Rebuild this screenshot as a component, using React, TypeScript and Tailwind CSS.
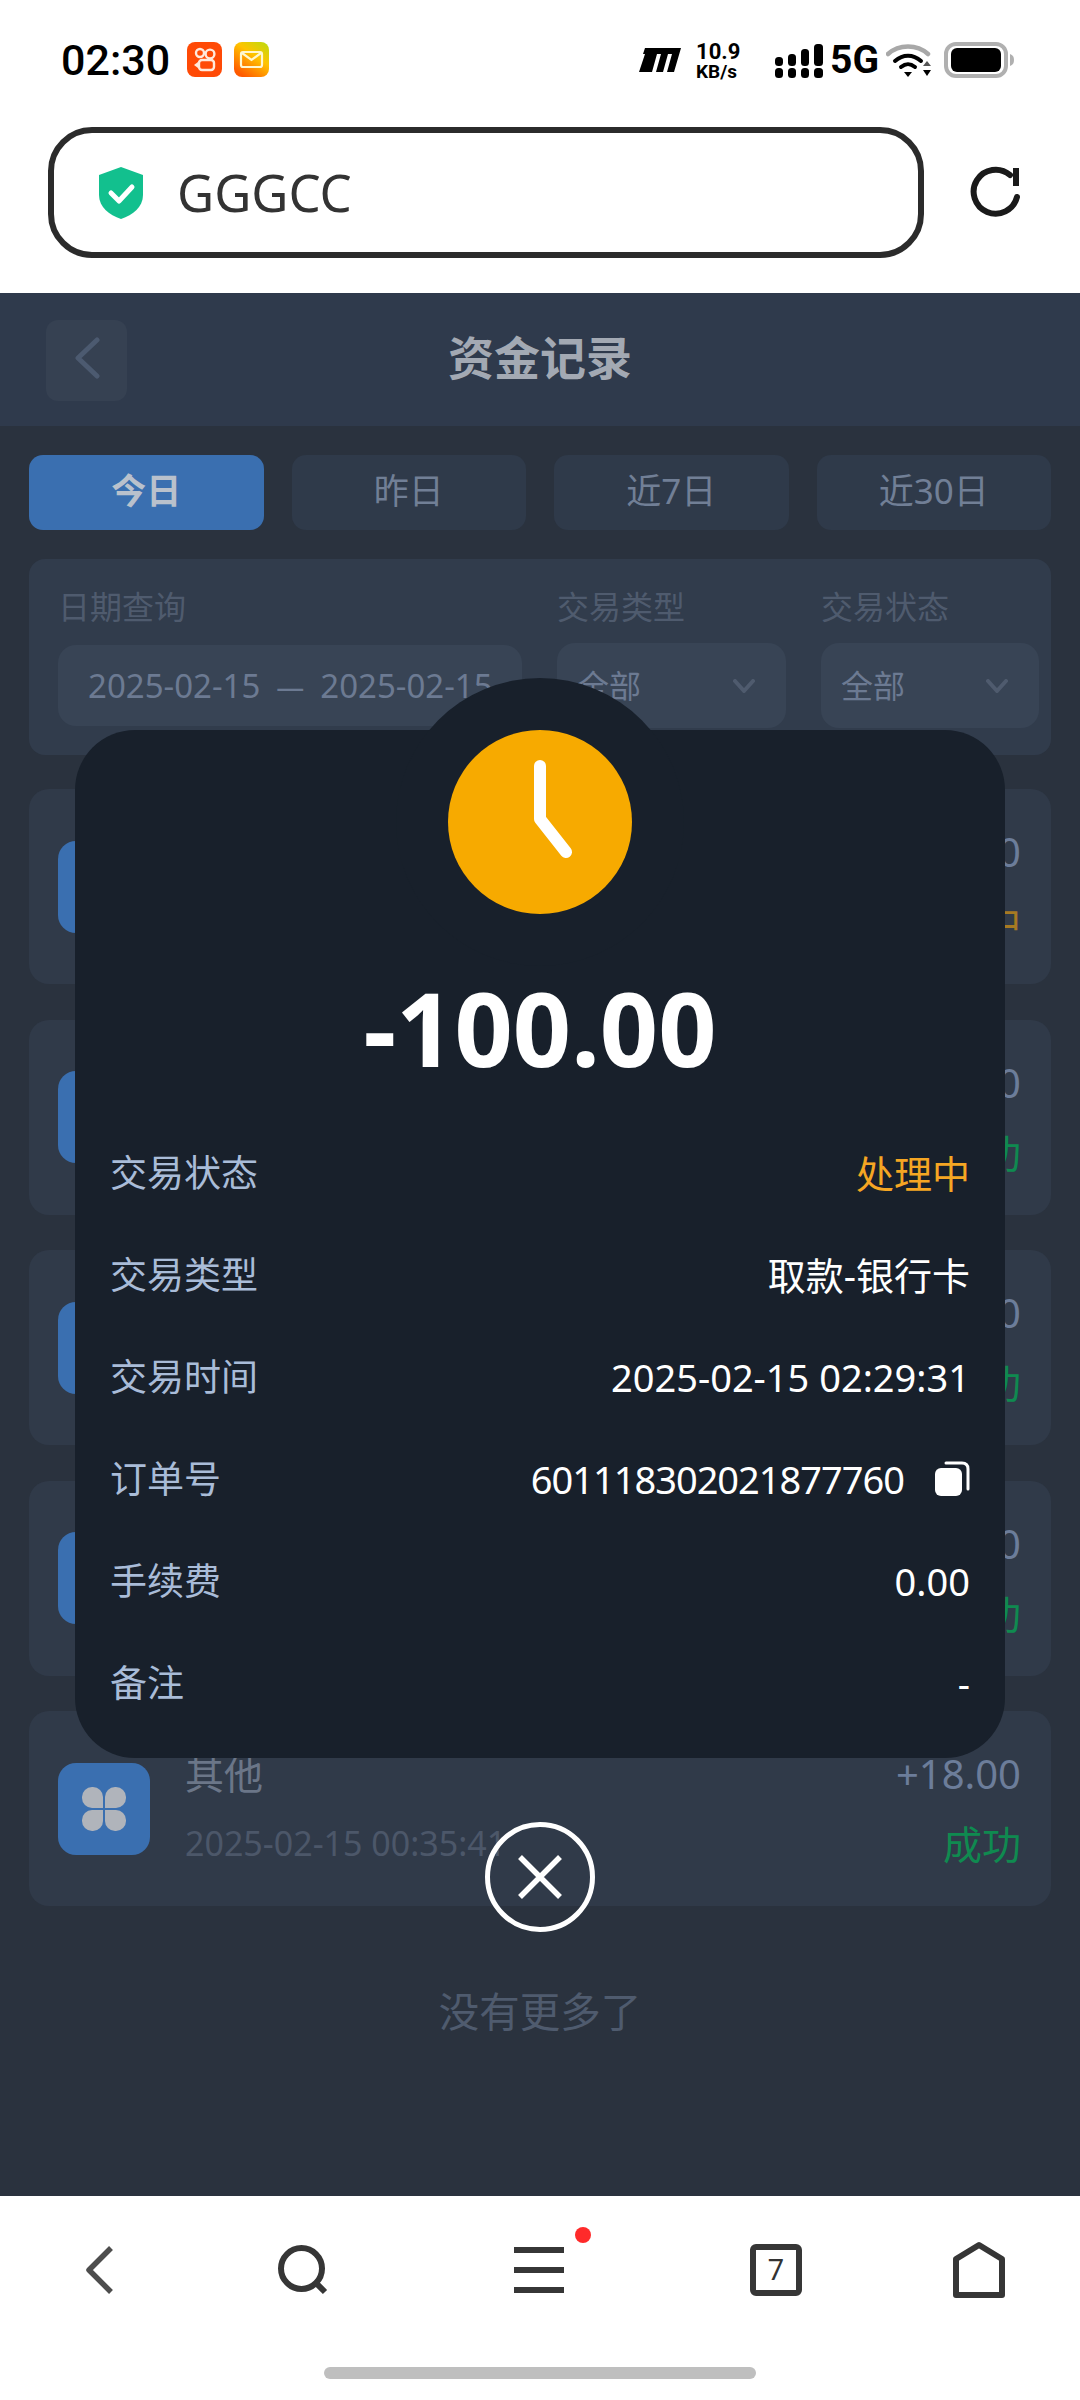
const rows = [
  { label: "交易状态", value: "处理中", tone: "text-[#f5a623]" },
  { label: "交易类型", value: "取款-银行卡", tone: "text-white" },
  { label: "交易时间", value: "2025-02-15 02:29:31", tone: "text-white" },
  { label: "订单号", value: "601118302021877760", tone: "text-white tracking-[-1px]", copy: true },
  { label: "手续费", value: "0.00", tone: "text-white" },
  { label: "备注", value: "-", tone: "text-white" },
];

const records = [
  { title: "取款-银行卡", time: "2025-02-15 02:29:31", amount: "-100.00", status: "处理中", tone: "text-[#a67a22]" },
  { title: "其他", time: "2025-02-15 01:48:12", amount: "+20.00", status: "成功", tone: "text-[#0f8a50]" },
  { title: "其他", time: "2025-02-15 01:20:05", amount: "+30.00", status: "成功", tone: "text-[#0f8a50]" },
  { title: "其他", time: "2025-02-15 00:52:37", amount: "+50.00", status: "成功", tone: "text-[#0f8a50]" },
  { title: "其他", time: "2025-02-15 00:35:41", amount: "+18.00", status: "成功", tone: "text-[#0f8a50]" },
];

const tabs = ["今日", "昨日", "近7日", "近30日"];

function Chevron() {
  return (
    <svg width="24" height="14" viewBox="0 0 24 14" fill="none" stroke="#4f5b6e" strokeWidth="4" strokeLinecap="round" strokeLinejoin="round">
      <path d="M3 2l9 10 9-10" />
    </svg>
  );
}

function StatusBar() {
  return (
    <div className="flex h-[115px] items-start pl-[61px] pr-[64px] pt-[42px]">
      <span className="h-[36px] w-[110px] font-['Roboto',sans-serif] text-[43px] leading-[36px] font-medium text-black">02:30</span>
      <svg className="ml-[16px]" width="35" height="35" viewBox="0 0 35 35" fill="none">
        <rect width="35" height="35" rx="8" fill="#ff4a06" />
        <circle cx="13" cy="11" r="4" stroke="#ffe9dc" strokeWidth="2.4" />
        <circle cx="23" cy="12" r="4.4" stroke="#ffe9dc" strokeWidth="2.4" />
        <rect x="12" y="18" width="15" height="10" rx="3" stroke="#ffe9dc" strokeWidth="2.4" />
        <path d="M11 20l-4 3 4 3z" fill="#ffe9dc" />
      </svg>
      <svg className="ml-[12px]" width="35" height="35" viewBox="0 0 35 35" fill="none">
        <defs>
          <linearGradient id="mailGrad" x1="1" y1="0" x2="0.3" y2="1">
            <stop offset="0" stopColor="#b8dc10" />
            <stop offset="0.45" stopColor="#ffc400" />
            <stop offset="1" stopColor="#ff5a00" />
          </linearGradient>
        </defs>
        <rect width="35" height="35" rx="8" fill="url(#mailGrad)" />
        <rect x="7" y="10" width="21" height="15" rx="2" stroke="#fff7cf" strokeWidth="2.2" />
        <path d="M8 11l9.500 7 9.500-7" stroke="#fff7cf" strokeWidth="2.2" />
      </svg>

      <div className="ml-auto flex items-start">
        <svg className="mt-[6px]" width="42" height="24" viewBox="0 0 42 24" fill="#000">
          <path d="M6 0h36l-7 24h-7l5-18h-4l-5 18h-7l5-18h-4L13 24H0L6 6H4z" />
        </svg>
        <div className="ml-[15px] flex w-[50px] flex-col font-['Roboto',sans-serif] font-bold text-black">
          <span className="text-[22px] leading-[20px]">10.9</span>
          <span className="text-[19px] leading-[20px]">KB/s</span>
        </div>
        <svg className="ml-[29px] mt-[2px]" width="50" height="34" viewBox="0 0 50 34" fill="#000">
          <rect x="0" y="13" width="8" height="9" rx="3.500" />
          <rect x="13" y="10" width="8" height="12" rx="3.500" />
          <rect x="26" y="5" width="8" height="17" rx="3.500" />
          <rect x="39" y="0" width="9" height="22" rx="3.500" />
          <rect x="0" y="24" width="8" height="10" rx="3.500" />
          <rect x="13" y="24" width="8" height="10" rx="3.500" />
          <rect x="26" y="24" width="8" height="10" rx="3.500" />
          <rect x="39" y="24" width="9" height="10" rx="3.500" />
        </svg>
        <span className="ml-[5px] font-['Roboto',sans-serif] text-[39px] leading-[36px] font-bold text-black">5G</span>
        <svg className="ml-[7px] mt-[2px]" width="46" height="34" viewBox="0 0 46 34" fill="none">
          <path d="M2 10C13 0 31 0 42 10" stroke="#a8a8a8" strokeWidth="4.500" strokeLinecap="round" />
          <path d="M9 17c8-7 18-7 26 0" stroke="#000" strokeWidth="4" strokeLinecap="round" />
          <path d="M15 23c5-4 9-4 14 0" stroke="#000" strokeWidth="4" strokeLinecap="round" />
          <path d="M18 28h8l-4 5z" fill="#000" />
          <path d="M41 17l4 5h-8z" fill="#555" />
          <path d="M37 26h8l-4 6z" fill="#000" />
        </svg>
        <svg className="ml-[12px]" width="72" height="36" viewBox="0 0 72 36" fill="none">
          <rect x="2" y="2" width="60" height="32" rx="10" stroke="#b0b0b0" strokeWidth="4" />
          <rect x="7" y="6" width="50" height="24" rx="6" fill="#000" />
          <path d="M66 12c3 1 4 3 4 6s-1 5-4 6z" fill="#b0b0b0" />
        </svg>
      </div>
    </div>
  );
}

function UrlBar() {
  return (
    <div className="flex h-[178px] items-start pl-[48px] pr-[58px] pt-[12px]">
      <div className="flex h-[131px] w-[876px] items-center rounded-[44px] border-[6px] border-[#2b2b2b] pl-[43px]">
        <svg width="48" height="52" viewBox="0 0 48 52">
          <path d="M24 0l22 8v20c0 12-10 20-22 24C12 48 2 40 2 28V8z" fill="#12c08e" />
          <path d="M14 26l8 8 13-14" fill="none" stroke="#fff" strokeWidth="5" strokeLinecap="round" strokeLinejoin="round" />
        </svg>
        <span className="ml-[32px] font-['Noto_Sans',sans-serif] text-[51px] leading-none text-[#333]">GGGCC</span>
      </div>
      <svg className="ml-[44px] mt-[38px]" width="54" height="54" viewBox="0 0 54 54" fill="none">
        <path d="M49 32A22 22 0 1 1 42 10" stroke="#1a1a1a" strokeWidth="6" strokeLinecap="round" />
        <rect x="45" y="3" width="6" height="18" fill="#1a1a1a" />
      </svg>
    </div>
  );
}

function BottomNav() {
  return (
    <div className="flex h-[204px] flex-col bg-white">
      <div className="flex h-[171px] items-start pl-[69px] pt-[44px]">
        <div className="flex h-[60px] w-[60px] items-center justify-center">
          <svg width="30" height="48" viewBox="0 0 30 48" fill="none" stroke="#4d4d4d" strokeWidth="5.500" strokeLinejoin="round">
            <path d="M27 2L5 24l22 22" />
          </svg>
        </div>
        <div className="ml-[144px] flex h-[60px] w-[60px] items-center justify-center">
          <svg width="54" height="54" viewBox="0 0 54 54" fill="none" stroke="#363636" strokeWidth="6">
            <circle cx="25.500" cy="25.500" r="20.500" />
            <path d="M39 39l10 10" />
          </svg>
        </div>
        <div className="relative ml-[176px] flex h-[60px] w-[60px] items-center justify-center">
          <div className="flex w-[50px] flex-col gap-[14px]">
            <div className="h-[6px] bg-[#363636]"></div>
            <div className="h-[6px] bg-[#363636]"></div>
            <div className="h-[6px] bg-[#363636]"></div>
          </div>
          <span className="absolute left-[66px] top-[-13px] h-[16px] w-[16px] rounded-full bg-[#ff2a2a]"></span>
        </div>
        <div className="ml-[177px] flex h-[60px] w-[60px] items-center justify-center">
          <div className="flex h-[52px] w-[52px] items-center justify-center rounded-[6px] border-[6px] border-[#363636] font-['Roboto',sans-serif] text-[29px] leading-none text-[#333]">7</div>
        </div>
        <div className="ml-[143px] flex h-[60px] w-[60px] items-center justify-center">
          <svg width="54" height="58" viewBox="0 0 54 58" fill="none" stroke="#363636" strokeWidth="6" strokeLinejoin="round">
            <path d="M27 4L50 18V54H4V18z" />
          </svg>
        </div>
      </div>
      <div className="mx-auto h-[12px] w-[432px] rounded-full bg-[#bfbfbf]"></div>
    </div>
  );
}

function RecordCard({ title, time, amount, status, tone }: (typeof records)[number]) {
  return (
    <div className="flex h-[195px] items-center rounded-[20px] bg-[#303a49] pl-[29px] pr-[30px]">
      <div className="flex h-[92px] w-[92px] items-center justify-center rounded-[18px] bg-[#3a6fb0]">
        <svg width="44" height="44" viewBox="0 0 44 44" fill="#b0b4bb">
          <path d="M21 21H10A10 10 0 0 1 0 11V10A10 10 0 0 1 10 0H11A10 10 0 0 1 21 10Z" />
          <path d="M21 21H10A10 10 0 0 1 0 11V10A10 10 0 0 1 10 0H11A10 10 0 0 1 21 10Z" transform="rotate(90 22 22)" />
          <path d="M21 21H10A10 10 0 0 1 0 11V10A10 10 0 0 1 10 0H11A10 10 0 0 1 21 10Z" transform="rotate(180 22 22)" />
          <path d="M21 21H10A10 10 0 0 1 0 11V10A10 10 0 0 1 10 0H11A10 10 0 0 1 21 10Z" transform="rotate(270 22 22)" />
        </svg>
      </div>
      <div className="ml-[35px] flex flex-1 flex-col gap-[25px]">
        <span className="text-[39px] leading-[45px] text-[#6b7688]">{title}</span>
        <span className="text-[34px] leading-[45px] text-[#4c5769]">{time}</span>
      </div>
      <div className="flex flex-col items-end gap-[25px]">
        <span className="text-[40px] leading-[45px] text-[#6c7d9a]">{amount}</span>
        <span className={`text-[39px] leading-[45px] ${tone}`}>{status}</span>
      </div>
    </div>
  );
}

function DetailModal() {
  return (
    <div className="absolute left-[75px] top-[730px] w-[930px]">
      <div className="relative h-[1028px] rounded-[60px] bg-[#18202b] px-[35px]">
        <div className="absolute left-[321px] top-[-52px] h-[288px] w-[288px] rounded-full bg-[#18202b]"></div>
        <div className="relative flex h-[392px] flex-col items-center">
          <svg width="184" height="184" viewBox="0 0 184 184" fill="none">
            <circle cx="92" cy="92" r="92" fill="#f7aa00" />
            <path d="M92 36v53l26 33" stroke="#fff" strokeWidth="12" strokeLinecap="round" strokeLinejoin="round" />
          </svg>
          <span className="mt-[58px] text-[102px] leading-[112px] font-bold text-white">-100.00</span>
        </div>
        {rows.map((row) => (
          <div key={row.label} className="relative flex h-[102px] items-center justify-between">
            <span className="text-[37px] text-[#a9bcd8]">{row.label}</span>
            <div className="flex items-center">
              <span className={`text-[38px] ${row.tone}`}>{row.value}</span>
              {row.copy && (
                <svg className="ml-[30px]" width="36" height="36" viewBox="0 0 36 36" fill="none">
                  <rect x="1" y="7" width="27" height="28" rx="6" fill="#fff" />
                  <path d="M12 2h16c4 0 6 2 6 6v20" stroke="#fff" strokeWidth="3" strokeLinecap="round" />
                </svg>
              )}
            </div>
          </div>
        ))}
      </div>
      <div className="absolute left-[410px] top-[1092px] flex h-[110px] w-[110px] items-center justify-center rounded-full border-[5px] border-white">
        <svg width="46" height="46" viewBox="0 0 46 46" fill="none" stroke="#fff" strokeWidth="5.500">
          <path d="M3 3l40 40M43 3L3 43" />
        </svg>
      </div>
    </div>
  );
}

export default function App() {
  return (
    <div className="relative flex h-[2400px] w-[1080px] flex-col overflow-hidden bg-white font-['Noto_Sans','Noto_Sans_CJK_SC',sans-serif]">
      <StatusBar />
      <UrlBar />

      <main className="flex flex-1 flex-col bg-[#2a323e]">
        <header className="relative flex h-[133px] items-center justify-center bg-[#2f3a4c] pb-[5px]">
          <div className="absolute left-[46px] top-[27px] flex h-[81px] w-[81px] items-center justify-center rounded-[12px] bg-[#364152] pb-[5px]">
            <svg width="26" height="42" viewBox="0 0 26 42" fill="none" stroke="#4c5a70" strokeWidth="5" strokeLinecap="round" strokeLinejoin="round">
              <path d="M23 3L4 21l19 18" />
            </svg>
          </div>
          <h1 className="text-[46px] font-bold text-[#a3a9b3]">资金记录</h1>
        </header>

        <div className="flex flex-col px-[29px] pt-[29px]">
          <div className="flex gap-[28px]">
            {tabs.map((tab, index) => (
              <div
                key={tab}
                className={`flex h-[75px] flex-1 items-center justify-center rounded-[14px] pb-[3px] text-[35px] ${
                  index === 0 ? "bg-[#3a6fb0] font-bold text-[#b9c1cc]" : "bg-[#2f3a4a] text-[#717f96]"
                }`}
              >
                {tab}
              </div>
            ))}
          </div>

          <section className="mt-[29px] h-[196px] rounded-[16px] bg-[#313c4c] pl-[29px] pr-[11px] pt-[28px]">
            <div className="grid grid-cols-[464px_229px_218px] gap-x-[35px] text-[32px] leading-[40px] text-[#4f5b6e]">
              <span>日期查询</span>
              <span>交易类型</span>
              <span>交易状态</span>
            </div>
            <div className="mt-[16px] grid grid-cols-[464px_229px_218px] items-center gap-x-[35px] text-[32px] text-[#6c7a92]">
              <div className="flex h-[81px] items-center rounded-[18px] bg-[#384455] pl-[30px] text-[33px]">
                <span>2025-02-15</span>
                <span className="mx-[16px] text-[28px]">—</span>
                <span>2025-02-15</span>
              </div>
              <div className="flex h-[85px] items-center justify-between rounded-[18px] bg-[#384455] pl-[20px] pr-[30px]">
                <span>全部</span>
                <Chevron />
              </div>
              <div className="flex h-[85px] items-center justify-between rounded-[18px] bg-[#384455] pl-[20px] pr-[30px]">
                <span>全部</span>
                <Chevron />
              </div>
            </div>
          </section>

          <div className="mt-[34px] flex flex-col gap-[35.500px]">
            {records.map((record) => (
              <RecordCard key={record.time} {...record} />
            ))}
          </div>

          <p className="mt-[78px] text-center text-[40.500px] leading-[56px] text-[#4f5b6e]">没有更多了</p>
        </div>
      </main>

      <BottomNav />
      <DetailModal />
    </div>
  );
}
